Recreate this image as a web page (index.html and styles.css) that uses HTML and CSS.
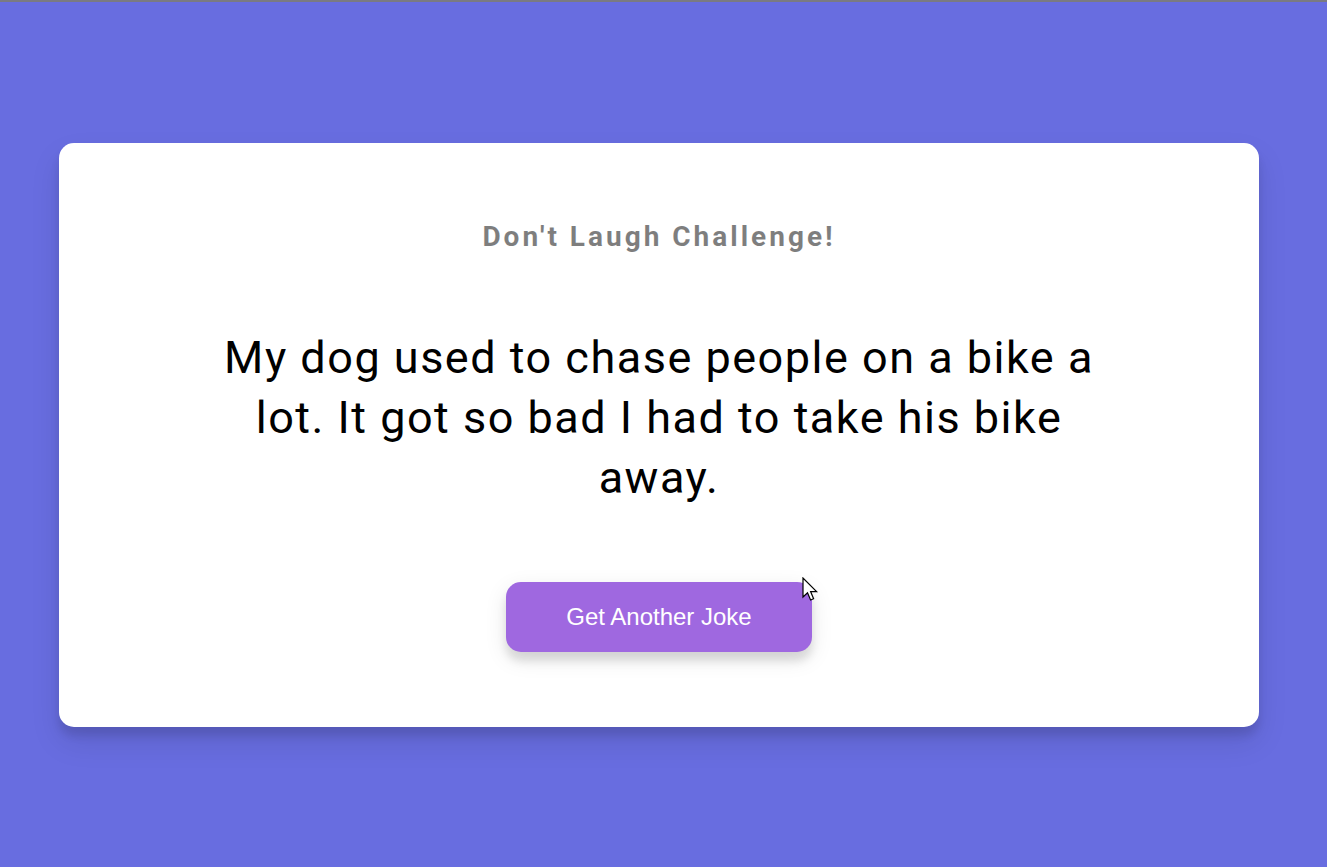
FILE: index.html
```html
<!DOCTYPE html>
<html lang="en">
<head>
<meta charset="UTF-8">
<title>Dad Jokes</title>
<link rel="stylesheet" href="styles.css">
</head>
<body>
  <div class="topline"></div>
  <main class="stage">
    <div class="container">
      <h3>Don't Laugh Challenge!</h3>
      <div class="joke">My dog used to chase people on a bike a lot. It got so bad I had to take his bike away.</div>
      <div class="btn-wrap">
        <button class="btn">Get Another Joke</button>
        <svg class="cursor" width="20" height="28" viewBox="0 0 20 28" xmlns="http://www.w3.org/2000/svg">
          <path d="M1 1 L1 20 L5.5 15.8 L8.6 23 L11.6 21.7 L8.6 14.6 L14.6 14.6 Z" fill="#fff" stroke="#000" stroke-width="1.2" stroke-linejoin="miter"/>
        </svg>
      </div>
    </div>
  </main>
</body>
</html>
```

FILE: styles.css
```css
* { box-sizing: border-box; }

html, body {
  margin: 0;
  padding: 0;
}

body {
  background-color: #686de0;
  font-family: Roboto, "Noto Sans", sans-serif;
  height: 100vh;
  overflow: hidden;
  display: flex;
  flex-direction: column;
}

.topline {
  height: 2px;
  background: #7a7a82;
  flex: none;
}

.stage {
  flex: 1;
  display: flex;
  align-items: center;
  justify-content: center;
  padding-right: 9px;
}

.container {
  background-color: #fff;
  border-radius: 15px;
  box-shadow: 0 15px 30px rgba(0, 0, 0, 0.1), 0 9px 9px rgba(0, 0, 0, 0.1);
  padding: 77px 30px 75px;
  text-align: center;
  width: 1200px;
}

h3 {
  margin: 0;
  font-size: 28px;
  font-weight: 700;
  opacity: 0.5;
  letter-spacing: 3px;
  line-height: 33px;
}

.joke {
  font-size: 45px;
  letter-spacing: 1.5px;
  line-height: 60px;
  margin: 75px auto 74px;
  max-width: 900px;
  color: #000;
}

.btn-wrap {
  position: relative;
  display: inline-block;
}

.btn {
  background-color: #9f68e0;
  color: #fff;
  border: 0;
  border-radius: 15px;
  box-shadow: 0 7px 22px rgba(0, 0, 0, 0.1), 0 9px 9px rgba(0, 0, 0, 0.1);
  padding: 21px 60px;
  font-family: "Liberation Sans", Arial, sans-serif;
  font-size: 24px;
  line-height: 28px;
  cursor: pointer;
}

.cursor {
  position: absolute;
  left: 296px;
  top: -5px;
  pointer-events: none;
}
```
